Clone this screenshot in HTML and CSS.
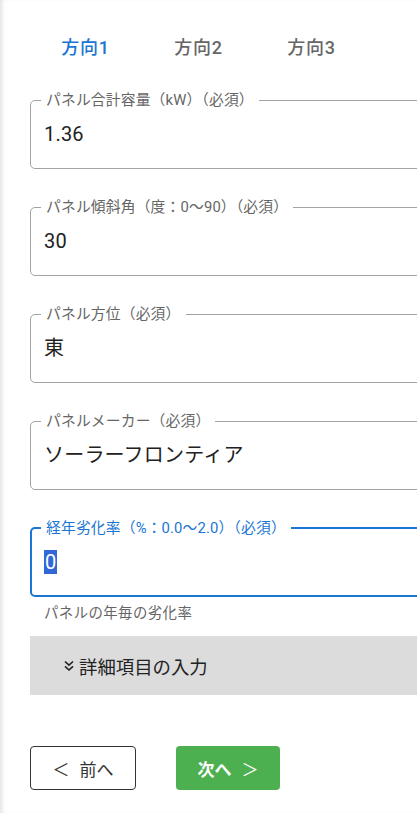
FILE: index.html
```
<!DOCTYPE html>
<html lang="ja">
<head>
<meta charset="utf-8">
<title>方向</title>
<link rel="stylesheet" href="styles.css">
</head>
<body>
<div class="page">
  <div class="tabs">
    <div class="tab active">方向1</div>
    <div class="tab">方向2</div>
    <div class="tab">方向3</div>
  </div>
  <div class="form">
    <fieldset class="field">
      <legend>パネル合計容量（kW）（必須）</legend>
      <div class="value">1.36</div>
    </fieldset>
    <fieldset class="field">
      <legend>パネル傾斜角（度：0〜90）（必須）</legend>
      <div class="value">30</div>
    </fieldset>
    <fieldset class="field">
      <legend>パネル方位（必須）</legend>
      <div class="value">東</div>
    </fieldset>
    <fieldset class="field">
      <legend>パネルメーカー（必須）</legend>
      <div class="value">ソーラーフロンティア</div>
    </fieldset>
    <fieldset class="field focused">
      <legend>経年劣化率（%：0.0〜2.0）（必須）</legend>
      <div class="value"><span class="sel">0</span></div>
    </fieldset>
    <div class="helper">パネルの年毎の劣化率</div>
    <div class="details">
      <svg class="chev" width="12" height="12" viewBox="0 0 12 12"><path d="M2 1.5 L6 5.2 L10 1.5 M2 6.3 L6 10 L10 6.3" fill="none" stroke="#222" stroke-width="1.6"/></svg>
      <span>詳細項目の入力</span>
    </div>
  </div>
  <div class="buttons">
    <button class="btn prev"><span class="lt">＜</span>前へ</button>
    <button class="btn next">次へ<span class="gt">＞</span></button>
  </div>
</div>
</body>
</html>
```
FILE: styles.css
```
html, body {
  margin: 0;
  padding: 0;
  background: #fff;
  overflow: hidden;
}
body {
  font-family: Roboto, "Noto Sans CJK JP", sans-serif;
  color: #212121;
}
.page {
  min-height: 813px;
  padding: 17px 0 0 30px;
  box-sizing: border-box;
  box-shadow: inset 4px 0 4px -2px rgba(0,0,0,0.12);
}
.tabs {
  display: flex;
  height: 58px;
  margin-left: -1px;
}
.tab {
  width: 113px;
  display: flex;
  align-items: center;
  justify-content: center;
  font-size: 18px;
  font-weight: 500;
  letter-spacing: 0.04em;
  color: #666;
}
.tab.active {
  color: #1976d2;
}
.form {
  width: 430px;
  margin-top: 17px;
}
.field {
  margin: 0 0 30px 0;
  padding: 0 13px;
  border: 1px solid #a3a3a3;
  border-radius: 5px;
  min-width: 0;
}
.field legend {
  padding: 0 5px;
  margin-left: -3px;
  font-size: 14.8px;
  line-height: 16px;
  color: #666;
  letter-spacing: 0.01em;
}
.value {
  padding: 14px 0 22px;
  font-size: 20px;
  line-height: 24px;
  color: #212121;
  letter-spacing: 0.01em;
}
.field.focused {
  border: 2px solid #1976d2;
  padding: 0 12px;
  margin-bottom: 0;
}
.field.focused legend {
  color: #1976d2;
}
.field.focused .value {
  padding-bottom: 21px;
}
.sel {
  display: inline-block;
  background: #3367d6;
  color: #fff;
  padding: 0 1px;
}
.helper {
  margin-top: 9px;
  padding-left: 14px;
  font-size: 14.4px;
  line-height: 16px;
  color: #666;
  letter-spacing: 0.03em;
}
.details {
  margin-top: 14px;
  height: 59px;
  background: #dcdcdc;
  display: flex;
  align-items: center;
  padding-left: 33px;
  font-size: 18.4px;
  color: #222;
}
.chev {
  margin-right: 4px;
  margin-top: 1px;
}
.buttons {
  display: flex;
  gap: 40px;
  margin-top: 51px;
}
.btn {
  height: 44px;
  display: flex;
  align-items: center;
  justify-content: center;
  font-family: Roboto, "Noto Sans CJK JP", sans-serif;
  font-size: 17px;
  border-radius: 4px;
  padding: 0;
}
.prev {
  width: 106px;
  background: #fff;
  border: 1px solid #333;
  color: #333;
}
.prev .lt {
  margin-right: 10px;
}
.next {
  width: 104px;
  background: #4caf50;
  border: none;
  color: #fff;
  font-weight: 700;
}
.next .gt {
  font-weight: 400;
  margin-left: 10px;
}
```
